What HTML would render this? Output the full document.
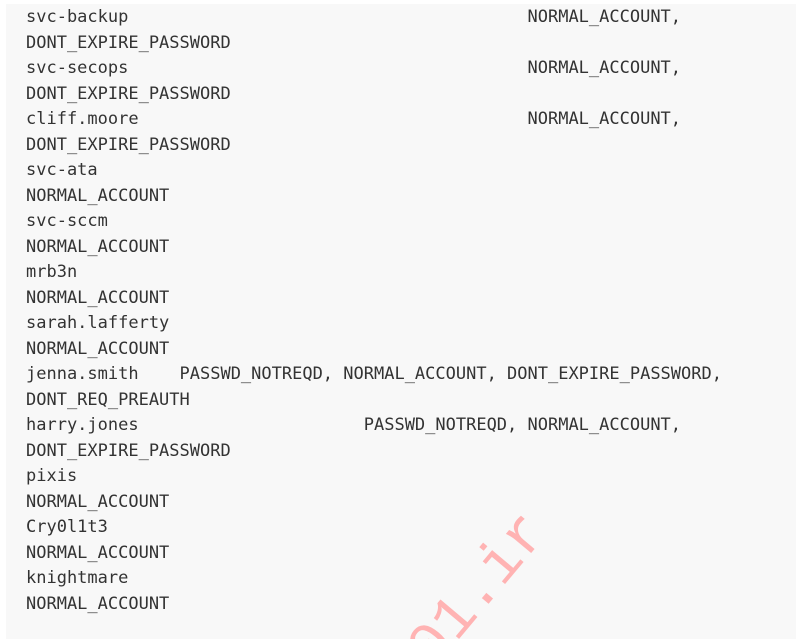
<!DOCTYPE html>
<html><head><meta charset="utf-8"><style>
html,body{margin:0;padding:0;background:#fff;width:798px;height:639px;overflow:hidden;position:relative}
.blk{position:absolute;left:6px;top:4px;width:790px;height:635px;background:#f8f8f8}
pre{position:absolute;left:26px;top:5px;margin:0;font-family:"DejaVu Sans Mono","Liberation Mono",monospace;font-size:17px;line-height:25.5px;color:#333}
svg{position:absolute;left:0;top:0}
</style></head><body>
<div class="blk"></div>
<pre>svc-backup                                       NORMAL_ACCOUNT,
DONT_EXPIRE_PASSWORD
svc-secops                                       NORMAL_ACCOUNT,
DONT_EXPIRE_PASSWORD
cliff.moore                                      NORMAL_ACCOUNT,
DONT_EXPIRE_PASSWORD
svc-ata
NORMAL_ACCOUNT
svc-sccm
NORMAL_ACCOUNT
mrb3n
NORMAL_ACCOUNT
sarah.lafferty
NORMAL_ACCOUNT
jenna.smith    PASSWD_NOTREQD, NORMAL_ACCOUNT, DONT_EXPIRE_PASSWORD,
DONT_REQ_PREAUTH
harry.jones                      PASSWD_NOTREQD, NORMAL_ACCOUNT,
DONT_EXPIRE_PASSWORD
pixis
NORMAL_ACCOUNT
Cry0l1t3
NORMAL_ACCOUNT
knightmare
NORMAL_ACCOUNT</pre>
<svg width="798" height="639"><text x="433" y="670" transform="rotate(-50 433 670)" font-family="Liberation Mono, monospace" font-size="60" fill="#ffb3b3">01.ir</text></svg>
</body></html>
